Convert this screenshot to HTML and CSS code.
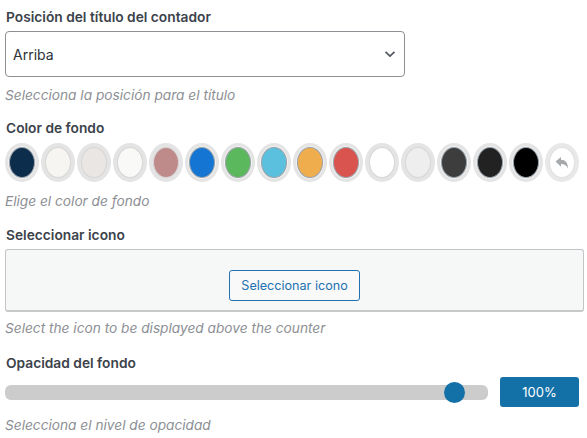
FILE: index.html
```html
<!DOCTYPE html>
<html lang="es">
<head>
<meta charset="utf-8">
<link rel="stylesheet" href="styles.css">
</head>
<body>
<div class="panel">
  <div class="field field-position">
    <div class="label">Posición del título del contador</div>
    <div class="select">
      <span>Arriba</span>
      <svg class="chevron" width="12" height="8" viewBox="0 0 12 8"><path d="M1.5 1.8 L6 6 L10.5 1.8" fill="none" stroke="#50575e" stroke-width="1.7"/></svg>
    </div>
    <div class="help">Selecciona la posición para el título</div>
  </div>

  <div class="field field-color">
    <div class="label">Color de fondo</div>
    <div class="swatches">
      <button class="sw bordered"><span style="background:#0d2d4d"></span></button>
      <button class="sw"><span style="background:#f7f5f1"></span></button>
      <button class="sw"><span style="background:#e9e6e4"></span></button>
      <button class="sw"><span style="background:#f9f9f7"></span></button>
      <button class="sw"><span style="background:#bf8a8a"></span></button>
      <button class="sw bordered"><span style="background:#1476d2"></span></button>
      <button class="sw bordered"><span style="background:#5cb85c"></span></button>
      <button class="sw bordered"><span style="background:#5bc0de"></span></button>
      <button class="sw bordered"><span style="background:#f0ad4e"></span></button>
      <button class="sw bordered"><span style="background:#d9534f"></span></button>
      <button class="sw"><span style="background:#ffffff"></span></button>
      <button class="sw"><span style="background:#eeeeee"></span></button>
      <button class="sw bordered"><span style="background:#3d3d3d"></span></button>
      <button class="sw bordered"><span style="background:#222222"></span></button>
      <button class="sw bordered"><span style="background:#000000"></span></button>
      <button class="sw reset"><span><svg width="16" height="14" viewBox="0 0 16 14"><path d="M1.5 5.5 L7 1 L7 3.8 C11.5 3.8 14 7 14 12.5 C12.5 9.5 10.5 8 7 8 L7 10.8 Z" fill="#a7aaad"/></svg></span></button>
    </div>
    <div class="help">Elige el color de fondo</div>
  </div>

  <div class="field field-icon">
    <div class="label">Seleccionar icono</div>
    <div class="icon-box">
      <button class="btn-secondary">Seleccionar icono</button>
    </div>
    <div class="help">Select the icon to be displayed above the counter</div>
  </div>

  <div class="field field-opacity">
    <div class="label">Opacidad del fondo</div>
    <div class="range-row">
      <div class="track"><div class="thumb"></div></div>
      <button class="btn-primary">100%</button>
    </div>
    <div class="help">Selecciona el nivel de opacidad</div>
  </div>
</div>
</body>
</html>
```

FILE: styles.css
```css
* { box-sizing: border-box; }
html, body { margin: 0; padding: 0; background: #fff; }
body {
  font-family: Inter, "Noto Sans", "Liberation Sans", sans-serif;
  font-size: 13.75px;
  color: #3c434a;
}
.panel {
  padding: 8px 4px 0 5px;
  width: 587px;
}
.label {
  font-weight: 600;
  font-size: 13.75px;
  line-height: 18px;
  color: #3c434a;
  padding-left: 1px;
}
.help {
  font-style: italic;
  font-size: 13.7px;
  line-height: 18px;
  color: #8c8f94;
}
.field-position .select {
  margin-top: 5px;
  width: 400px;
  height: 46px;
  border: 1px solid #8c8f94;
  border-radius: 4px;
  display: flex;
  align-items: center;
  justify-content: space-between;
  padding: 0 8px 0 7px;
  font-size: 14px;
  color: #2c3338;
}
.field-position .help { margin-top: 9px; }
.field-color { margin-top: 15px; }
.swatches {
  margin-top: 6px;
  display: flex;
  gap: 2px;
}
.sw {
  width: 34px;
  height: 39px;
  padding: 4px;
  border: none;
  border-radius: 50%;
  background: #e4e4e4;
  display: flex;
}
.sw span {
  flex: 1;
  border-radius: 50%;
  border: 1px solid #d6d6d6;
  display: flex;
  align-items: center;
  justify-content: center;
}
.sw.bordered span { border-color: #9aa2aa; box-shadow: 0 0 0 1px #f0f0f0; }
.sw.reset { background: #e8e8e8; }
.sw.reset span { background: #fff; border-color: #e0e0e0; }
.field-color .help { margin-top: 10px; }
.field-icon { margin-top: 16px; }
.icon-box {
  margin-top: 5px;
  height: 63px;
  width: 579px;
  background: #f6f7f7;
  border: 1px solid #c3c4c7;
  border-bottom: 2px solid #c8c8c8;
  border-radius: 3px;
  display: flex;
  align-items: center;
  justify-content: center;
}
.btn-secondary {
  height: 31px;
  padding: 0 11px;
  background: #f9f9f9;
  border: 1px solid #2271b1;
  border-radius: 3px;
  color: #2271b1;
  font-family: inherit;
  font-size: 12.6px;
  margin-top: 10px;
}
.field-icon .help { margin-top: 7px; }
.field-opacity { margin-top: 17px; }
.range-row {
  margin-top: 5px;
  display: flex;
  align-items: center;
  gap: 12px;
}
.track {
  position: relative;
  width: 483px;
  height: 15px;
  background: #cccccc;
  border-radius: 6px;
}
.thumb {
  position: absolute;
  left: 439px;
  top: -3px;
  width: 21px;
  height: 21px;
  border-radius: 50%;
  background: #1471a8;
}
.btn-primary {
  width: 79px;
  height: 30px;
  background: #1471a8;
  color: #fff;
  border: none;
  border-radius: 3px;
  font-family: inherit;
  font-size: 13px;
}
.field-opacity .help { margin-top: 9px; }
```
